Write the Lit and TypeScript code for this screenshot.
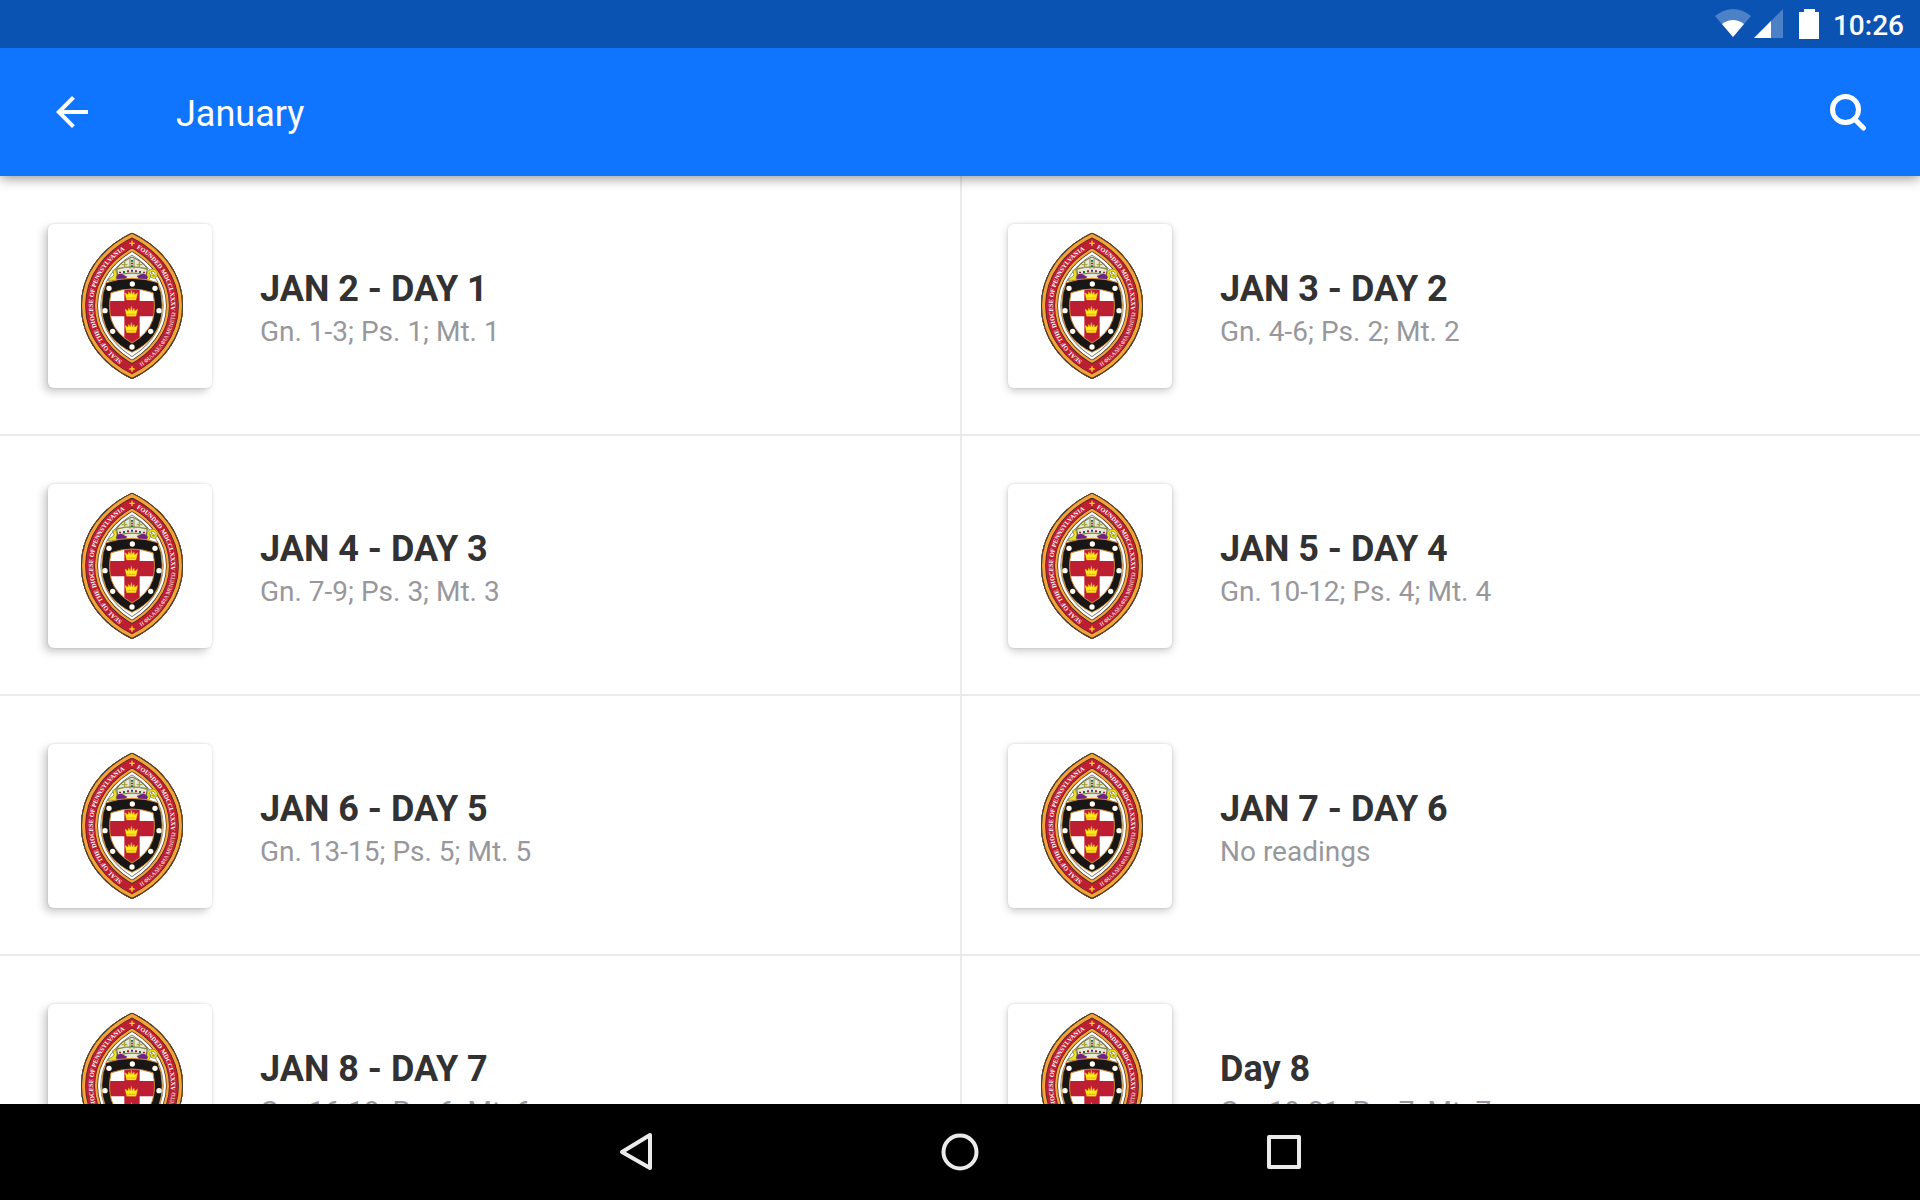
import { LitElement, html, svg, css } from "lit";
import { customElement } from "lit/decorators.js";

interface Reading {
  title: string;
  passages: string;
}

const READINGS: Reading[] = [
  { title: "JAN 2 - DAY 1", passages: "Gn. 1-3; Ps. 1; Mt. 1" },
  { title: "JAN 3 - DAY 2", passages: "Gn. 4-6; Ps. 2; Mt. 2" },
  { title: "JAN 4 - DAY 3", passages: "Gn. 7-9; Ps. 3; Mt. 3" },
  { title: "JAN 5 - DAY 4", passages: "Gn. 10-12; Ps. 4; Mt. 4" },
  { title: "JAN 6 - DAY 5", passages: "Gn. 13-15; Ps. 5; Mt. 5" },
  { title: "JAN 7 - DAY 6", passages: "No readings" },
  { title: "JAN 8 - DAY 7", passages: "Gn. 16-18; Ps. 6; Mt. 6" },
  { title: "Day 8", passages: "Gn. 19-21; Ps. 7; Mt. 7" },
];

const VESICA =
  "M252 26C160 70 99 150 99 245C99 340 160 421 252 465C344 421 405 340 405 245C405 150 344 70 252 26Z";

const OUTER_SHIELD =
  "M174 176Q252 150 330 176Q333 190 339 206Q353 284 316 336Q290 368 252 385Q214 368 188 336Q151 284 165 206Q171 190 174 176Z";

const INNER_SHIELD =
  "M189 206Q252 184 315 206Q324 250 314 288Q300 330 252 357Q204 330 190 288Q180 250 189 206Z";

/* Rings are strokes on the outer contour, widest first, clipped to the inside. */
const RINGS: [string, number][] = [
  ["#77736c", 120],
  ["#ffffff", 116],
  ["#3a2a20", 102],
  ["#f4a436", 98],
  ["#3a2420", 84],
  ["#be1e32", 81],
  ["#3a2420", 29],
  ["#f4a436", 25],
  ["#3a3430", 6],
];

const STUDS = [
  [253, 180], [183, 193], [321, 193], [171, 260],
  [333, 260], [194, 322], [308, 322], [252, 369],
];

const crown = (y: number) => svg`
  <path class="crown" transform="translate(250 ${y})"
    d="M-14 15L-19 -7L-10 -1L-8 -10L-3 -2L0 -16L3 -2L8 -10L10 -1L19 -7L14 15Z"></path>
  <path class="crown-band" transform="translate(250 ${y})" d="M-12 9H12"></path>`;

/** Diocesan seal. */
@customElement("diocese-seal")
export class DioceseSeal extends LitElement {
  static styles = css`
    :host {
      display: block;
    }
    svg {
      display: block;
      width: 100%;
      height: 100%;
    }
    .lettering {
      fill: #fff;
      font-family: "Liberation Serif", serif;
      font-weight: 700;
      font-size: 19px;
    }
    .greek {
      font-weight: 400;
      font-size: 17px;
    }
    .crown {
      fill: #ffec12;
      stroke: #e8b010;
      stroke-width: 1;
    }
    .crown-band {
      stroke: #d8960c;
      stroke-width: 2;
    }
    .ring {
      fill: none;
      stroke-miterlimit: 8;
    }
  `;

  render() {
    return html`
      <svg viewBox="0 0 492 492" role="img" aria-label="Seal of the Diocese of Pennsylvania">
        <defs>
          <clipPath id="outer"><path d=${VESICA}></path></clipPath>
          <clipPath id="inner"><path d=${INNER_SHIELD}></path></clipPath>
          <path id="west" d="M252 428C185 396 135 325 135 245C135 165 185 97 252 66"></path>
          <path id="east" d="M252 66C319 97 369 165 369 245C369 255 368 265 366 275"></path>
          <path id="south" d="M252 443C327 407 383 335 383 245"></path>
        </defs>

        <g clip-path="url(#outer)">
          <path d=${VESICA} fill="#fff"></path>
          ${RINGS.map(
            ([color, width]) => svg`<path class="ring" d=${VESICA} stroke=${color} stroke-width=${width}></path>`
          )}
        </g>

        <text class="lettering"><textPath href="#west" startOffset="34">SEAL OF THE DIOCESE OF PENNSYLVANIA</textPath></text>
        <text class="lettering"><textPath href="#east" startOffset="15">FOUNDED MDCCLXXXV</textPath></text>
        <text class="lettering greek"><textPath href="#south" startOffset="32">Η ΦΙΛΑΔΕΛΦΙΑ ΜΕΝΕΤΩ</textPath></text>

        <path d="M252 50V66M244 58H260M252 427V443M244 435H260" stroke="#ffd21c" stroke-width="4"></path>

        <!-- mitre -->
        <path d="M252 99C232 108 214 120 206 135L212 170H292L298 135C290 120 272 108 252 99Z"
          fill="#e6e8da" stroke="#5f6030" stroke-width="3"></path>
        <path d="M206 135Q252 122 298 135M211 153Q252 142 293 153" fill="none" stroke="#8b8c34" stroke-width="4"></path>
        <path d="M246 104V134M258 104V134" stroke="#8b8c34" stroke-width="3"></path>
        <path d="M230 112V132M221 122H238M274 112V132M266 122H283" stroke="#a5a640" stroke-width="4"></path>
        <path d="M252 108V113M252 124V129M228 141V147M276 141V147" stroke="#1c6c44" stroke-width="6"></path>
        <path d="M252 116V121M240 139V145M264 139V145M216 143V148M288 143V148" stroke="#a81c40" stroke-width="6"></path>
        <path d="M252 137V143" stroke="#303c88" stroke-width="6"></path>
        <path d="M201 168Q203 150 219 149L238 158L228 168ZM303 168Q301 152 285 149L266 156L276 168Z" fill="#70218a"></path>
        <path d="M178 169Q190 158 192 160L198 152L194 140L202 136L207 150L204 163L215 169Z"
          fill="#ece51c" stroke="#77702a" stroke-width="2"></path>
        <path d="M296 169Q305 163 303 155Q298 141 312 139Q327 140 324 154Q320 163 312 158Q308 152 315 150"
          fill="none" stroke="#77702a" stroke-width="8"></path>
        <path d="M296 169Q305 163 303 155Q298 141 312 139Q327 140 324 154Q320 163 312 158Q308 152 315 150"
          fill="none" stroke="#ece51c" stroke-width="5"></path>

        <!-- shield -->
        <path d=${OUTER_SHIELD} fill="#191715" stroke="#d8922e" stroke-width="3"></path>
        <g clip-path="url(#inner)">
          <path d="M170 180H340V370H170Z" fill="#fff"></path>
          <path d="M229 180H275V370H229ZM170 231H340V277H170Z" fill="#be1e32"></path>
        </g>
        <path d=${INNER_SHIELD} fill="none" stroke="#c9852c" stroke-width="3"></path>
        ${STUDS.map(([x, y]) => svg`<circle cx=${x} cy=${y} r="8" fill="#fffdf4"></circle>`)}
        ${[213, 262, 311].map(crown)}
      </svg>
    `;
  }
}

@customElement("app-root")
export class AppRoot extends LitElement {
  static styles = css`
    :host {
      display: flex;
      flex-direction: column;
      height: 100vh;
      overflow: hidden;
      background: #fff;
      font-family: Roboto, "Liberation Sans", sans-serif;
    }
    svg {
      display: block;
    }
    button {
      display: block;
      margin: 0;
      padding: 0;
      border: 0;
      background: none;
      color: inherit;
      cursor: pointer;
    }
    .status {
      flex: none;
      display: flex;
      align-items: center;
      justify-content: flex-end;
      height: 48px;
      padding-right: 16px;
      background: #0a53b2;
      color: #fff;
      z-index: 2;
    }
    .clock {
      padding: 4px 0 0 14px;
      font-size: 28px;
      line-height: 32px;
      font-weight: 500;
    }
    .bar {
      flex: none;
      display: flex;
      align-items: center;
      height: 128px;
      padding: 0 48px;
      background: #0f75ff;
      color: #fff;
      box-shadow: 0 2px 12px rgba(0, 0, 0, 0.45);
      z-index: 1;
    }
    .heading {
      flex: 1;
      margin: 0;
      padding: 4px 0 0 80px;
      font-size: 36px;
      line-height: 44px;
      font-weight: 400;
    }
    .list {
      flex: 1;
      min-height: 0;
      overflow: hidden;
      display: grid;
      grid-template-columns: 1fr 1fr;
      align-content: start;
      margin: 0;
      padding: 0;
      list-style: none;
    }
    .cell {
      border-bottom: 2px solid #ebebed;
    }
    .cell:nth-child(even) {
      border-left: 2px solid #ebebed;
    }
    .entry {
      display: flex;
      align-items: center;
      gap: 48px;
      padding: 48px 48px 46px;
      color: inherit;
      text-decoration: none;
    }
    .cell:nth-child(even) .entry {
      padding-left: 46px;
    }
    .thumb {
      flex: none;
      width: 164px;
      height: 164px;
      border-radius: 6px;
      background: #fff;
      box-shadow: 0 3px 8px rgba(0, 0, 0, 0.2), 0 0 3px rgba(0, 0, 0, 0.12);
    }
    .cell:nth-child(odd) .thumb {
      box-shadow: -4px 4px 8px rgba(0, 0, 0, 0.2), 0 0 3px rgba(0, 0, 0, 0.14);
    }
    .text {
      display: flex;
      flex-direction: column;
      gap: 4px;
      padding-top: 6px;
    }
    .title {
      margin: 0;
      font-size: 36px;
      line-height: 42px;
      font-weight: 700;
      color: #323232;
    }
    .passages {
      margin: 0;
      font-size: 28px;
      line-height: 36px;
      color: #98989c;
    }
    .nav {
      flex: none;
      display: flex;
      align-items: center;
      justify-content: center;
      gap: 276px;
      height: 96px;
      background: #000;
      color: #ebebeb;
      z-index: 1;
    }
  `;

  render() {
    return html`
      <div class="status">
        <svg width="106" height="48" viewBox="0 0 106 48" fill="#fff" aria-hidden="true">
          <path d="M2 16Q20 2 38 16L20 37Z" opacity="0.27"></path>
          <path d="M9 24Q20 16 31 24L20 37Z"></path>
          <path d="M70 9V38H41Z" opacity="0.27"></path>
          <path d="M58 21V38H41Z"></path>
          <path d="M91 9H102V12H106V39H86V12H91Z"></path>
        </svg>
        <time class="clock">10:26</time>
      </div>

      <header class="bar">
        <button aria-label="Back">
          <svg width="48" height="48" viewBox="0 0 48 48" fill="currentColor">
            <path d="M40 22H15.7L26.9 10.8L24 8L8 24L24 40L26.8 37.2L15.7 26H40Z"></path>
          </svg>
        </button>
        <h1 class="heading">January</h1>
        <button aria-label="Search">
          <svg width="48" height="48" viewBox="0 0 48 48" fill="none" stroke="currentColor">
            <circle cx="21.5" cy="21.5" r="13" stroke-width="5"></circle>
            <path d="M31 31.5L39.5 40" stroke-width="5" stroke-linecap="round"></path>
          </svg>
        </button>
      </header>

      <ul class="list">
        ${READINGS.map(
          (r) => html`
            <li class="cell">
              <a class="entry" href="#">
                <diocese-seal class="thumb"></diocese-seal>
                <div class="text">
                  <h2 class="title">${r.title}</h2>
                  <p class="passages">${r.passages}</p>
                </div>
              </a>
            </li>
          `
        )}
      </ul>

      <nav class="nav" aria-label="System">
        <button aria-label="Back">
          <svg width="48" height="48" viewBox="0 0 48 48" fill="none" stroke="currentColor" stroke-width="4" stroke-linejoin="round">
            <path d="M38 7V40L10 24Z"></path>
          </svg>
        </button>
        <button aria-label="Home">
          <svg width="48" height="48" viewBox="0 0 48 48" fill="none" stroke="currentColor" stroke-width="4">
            <circle cx="24" cy="24" r="16.5"></circle>
          </svg>
        </button>
        <button aria-label="Recent apps">
          <svg width="48" height="48" viewBox="0 0 48 48" fill="none" stroke="currentColor" stroke-width="4" stroke-linejoin="round">
            <rect x="9" y="9" width="30" height="30"></rect>
          </svg>
        </button>
      </nav>
    `;
  }
}
